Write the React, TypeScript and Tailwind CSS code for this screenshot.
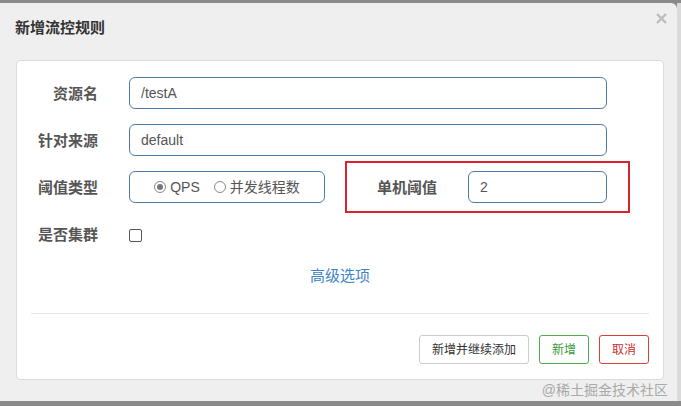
import { useState } from "react"

const font = { fontFamily: '"Liberation Sans", "Noto Sans CJK SC", sans-serif' }

function Field({ label, children }: { label: string; children: React.ReactNode }) {
  return (
    <div className="flex h-[32px] items-center">
      <label className="w-[81px] shrink-0 text-right text-[15px] font-bold leading-none text-[#555]">{label}</label>
      <div className="ml-[31px] flex h-full items-center">{children}</div>
    </div>
  )
}

export default function App() {
  const [resource, setResource] = useState("/testA")
  const [limitApp, setLimitApp] = useState("default")
  const [grade, setGrade] = useState("qps")
  const [count, setCount] = useState("2")
  const [cluster, setCluster] = useState(false)

  const inputCls =
    "h-[32px] rounded-[6px] border border-[#4f7ca6] bg-white px-[11px] text-[14px] text-[#555] outline-none"

  return (
    <div className="h-[406px] w-[681px] overflow-hidden bg-[#8a8a8a] pt-[3px]" style={font}>
      <div className="flex h-[398px]">
        <div className="flex w-[677px] flex-col rounded-tr-[6px] bg-[#efefef]">
          {/* header */}
          <div className="flex h-[57px] items-start justify-between">
            <h4 className="mt-[16px] ml-[15px] text-[15px] font-bold leading-[18px] text-[#333]">新增流控规则</h4>
            <button className="mt-[10px] mr-[10px] p-0">
              <svg width="11" height="11" viewBox="0 0 11 11" className="block">
                <path d="M1 1 L10 10 M10 1 L1 10" stroke="#bdbdbd" strokeWidth="2.4" strokeLinecap="butt" />
              </svg>
            </button>
          </div>

          {/* body */}
          <div className="ml-[16px] w-[648px] rounded-[4px] border border-[#dcdcdc] bg-white pt-[16px] pb-[15px]">
            <div className="flex flex-col gap-[15px]">
              <Field label="资源名">
                <input className={`${inputCls} w-[478px]`} value={resource} onChange={(e) => setResource(e.target.value)} />
              </Field>
              <Field label="针对来源">
                <input className={`${inputCls} w-[478px]`} value={limitApp} onChange={(e) => setLimitApp(e.target.value)} />
              </Field>
              <div className="flex h-[32px] items-center">
                <label className="w-[81px] shrink-0 text-right text-[15px] font-bold leading-none text-[#555]">阈值类型</label>
                <div className="ml-[31px] flex h-[32px] w-[196px] items-center justify-center gap-[5px] rounded-[6px] border border-[#4f7ca6] text-[14px] text-[#555]">
                  <label className="flex items-center gap-[4px]" onClick={() => setGrade("qps")}>
                    <span className="flex h-[12px] w-[12px] items-center justify-center rounded-full border border-[#888] bg-white">
                      {grade === "qps" && <span className="h-[6px] w-[6px] rounded-full bg-[#777]" />}
                    </span>
                    <span className="leading-none">QPS</span>
                  </label>
                  <label className="ml-[9px] flex items-center gap-[4px]" onClick={() => setGrade("thread")}>
                    <span className="flex h-[12px] w-[12px] items-center justify-center rounded-full border border-[#888] bg-white">
                      {grade === "thread" && <span className="h-[6px] w-[6px] rounded-full bg-[#777]" />}
                    </span>
                    <span className="leading-none">并发线程数</span>
                  </label>
                </div>
                {/* highlighted */}
                <div className="ml-[20px] flex h-[52px] w-[285px] shrink-0 items-center border-2 border-[#d9232e] pl-[30px]">
                  <label className="text-[15px] font-bold leading-none text-[#555]">单机阈值</label>
                  <input className={`${inputCls} ml-[31px] w-[139px]`} value={count} onChange={(e) => setCount(e.target.value)} />
                </div>
              </div>
              <Field label="是否集群">
                <input
                  type="checkbox"
                  checked={cluster}
                  onChange={(e) => setCluster(e.target.checked)}
                  className="mt-[2px] h-[13px] w-[13px] appearance-none rounded-[2px] border border-[#555] bg-white"
                />
              </Field>
            </div>

            <div className="mt-[14px] text-center">
              <a className="text-[15px] leading-[18px] text-[#3d84c6]">高级选项</a>
            </div>

            <div className="mx-[14px] mt-[25px] border-t border-[#e5e5e5]" />

            <div className="mt-[21px] mr-[14px] flex justify-end gap-[10px] text-[12px] leading-none">
              <button className="h-[29px] rounded-[3px] border border-[#ccc] bg-white px-[12px] text-[#333]">新增并继续添加</button>
              <button className="h-[29px] rounded-[3px] border border-[#4cae4c] bg-white px-[12px] text-[#3c9a3c]">新增</button>
              <button className="h-[29px] rounded-[3px] border border-[#d43f3a] bg-white px-[12px] text-[#c9302c]">取消</button>
            </div>
          </div>

          <div className="mt-[2px] mr-[9px] text-right text-[14px] leading-[17px] text-[#a9a9a9]">@稀土掘金技术社区</div>
        </div>
        <div className="flex-1 bg-[#dadada]" />
      </div>
    </div>
  )
}
